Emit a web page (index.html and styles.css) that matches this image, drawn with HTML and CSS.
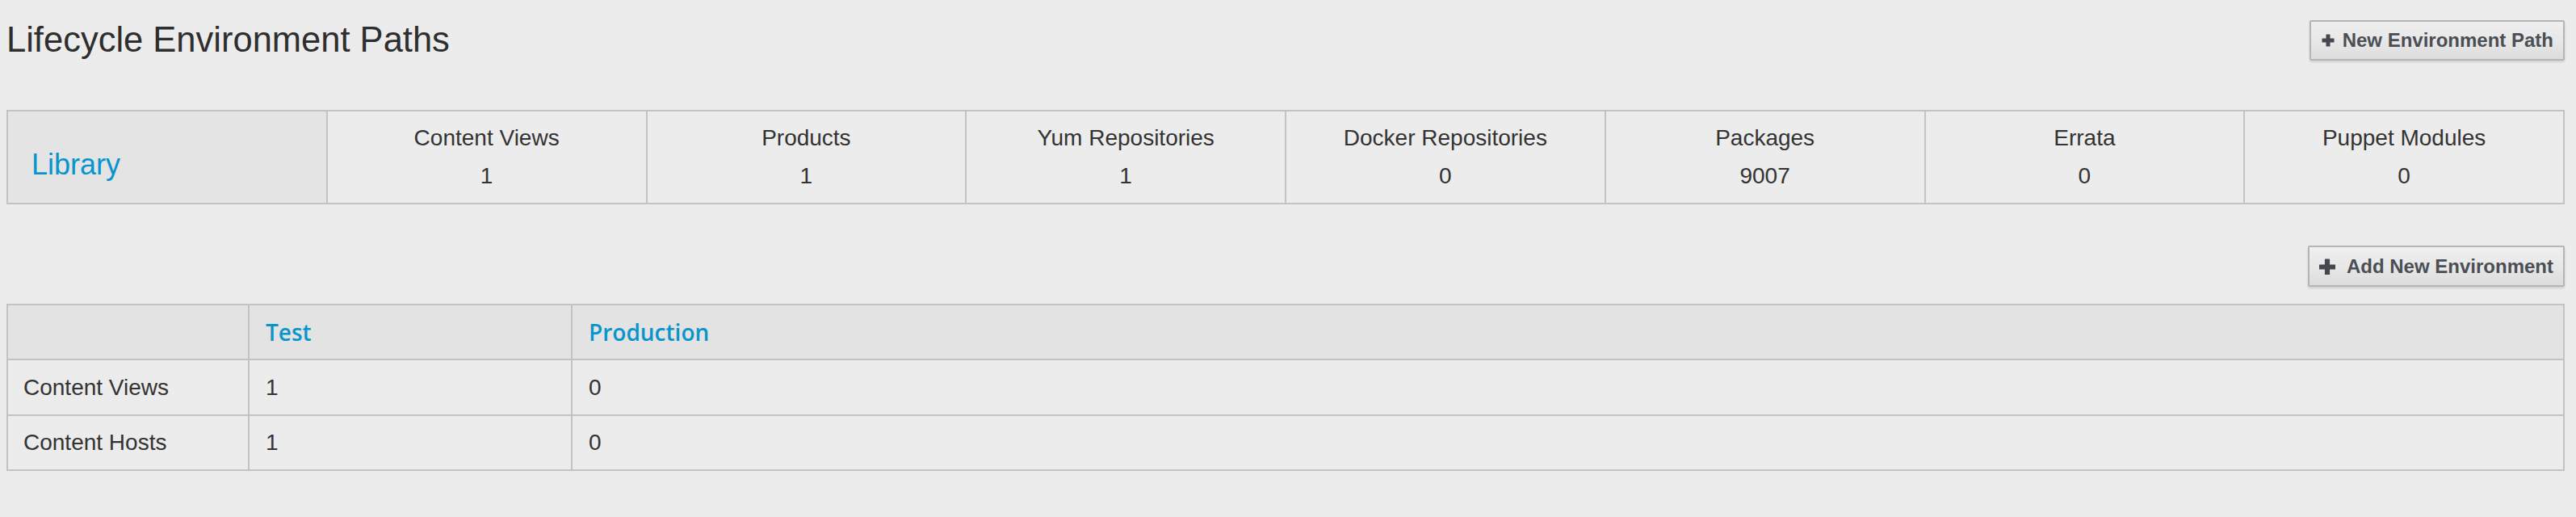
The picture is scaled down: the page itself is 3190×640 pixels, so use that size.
FILE: index.html
```html
<!DOCTYPE html>
<html>
<head>
<meta charset="utf-8">
<link rel="stylesheet" href="styles.css">
<title>Lifecycle Environment Paths</title>
</head>
<body>
<div class="page">
  <div class="top-row">
    <h1 class="title">Lifecycle Environment Paths</h1>
    <button class="btn btn-path">
      <svg class="plus plus-sm" viewBox="0 0 16 16"><path d="M6 0.5h4a0.5 0.5 0 0 1 .5 .5v4.5H15a0.5 0.5 0 0 1 .5 .5v4a0.5 0.5 0 0 1 -.5 .5h-4.5V15a0.5 0.5 0 0 1 -.5 .5H6a0.5 0.5 0 0 1 -.5 -.5v-4.5H1a0.5 0.5 0 0 1 -.5 -.5V6a0.5 0.5 0 0 1 .5 -.5h4.5V1a0.5 0.5 0 0 1 .5 -.5z"/></svg>
      <span>New Environment Path</span>
    </button>
  </div>

  <table class="summary">
    <tr>
      <td class="lib-cell"><a class="lib-link">Library</a></td>
      <td class="stat"><div class="stat-label">Content Views</div><div class="stat-val">1</div></td>
      <td class="stat"><div class="stat-label">Products</div><div class="stat-val">1</div></td>
      <td class="stat"><div class="stat-label">Yum Repositories</div><div class="stat-val">1</div></td>
      <td class="stat"><div class="stat-label">Docker Repositories</div><div class="stat-val">0</div></td>
      <td class="stat"><div class="stat-label">Packages</div><div class="stat-val">9007</div></td>
      <td class="stat"><div class="stat-label">Errata</div><div class="stat-val">0</div></td>
      <td class="stat"><div class="stat-label">Puppet Modules</div><div class="stat-val">0</div></td>
    </tr>
  </table>

  <div class="add-row">
    <button class="btn btn-add">
      <svg class="plus plus-lg" viewBox="0 0 20 20"><path d="M7.5 0.5h5a0.6 0.6 0 0 1 .6 .6v6.4h6.3a0.6 0.6 0 0 1 .6 .6v4.8a0.6 0.6 0 0 1 -.6 .6h-6.3v6.3a0.6 0.6 0 0 1 -.6 .6h-5a0.6 0.6 0 0 1 -.6 -.6v-6.3H0.6a0.6 0.6 0 0 1 -.6 -.6V8.1a0.6 0.6 0 0 1 .6 -.6h6.3V1.1a0.6 0.6 0 0 1 .6 -.6z"/></svg>
      <span>Add New Environment</span>
    </button>
  </div>

  <table class="envs">
    <thead>
      <tr>
        <th class="c1"></th>
        <th class="c2"><a class="env-link">Test</a></th>
        <th class="c3"><a class="env-link">Production</a></th>
      </tr>
    </thead>
    <tbody>
      <tr>
        <td>Content Views</td>
        <td>1</td>
        <td>0</td>
      </tr>
      <tr>
        <td>Content Hosts</td>
        <td>1</td>
        <td>0</td>
      </tr>
    </tbody>
  </table>
</div>
</body>
</html>
```

FILE: styles.css
```css
html, body {
  margin: 0;
  padding: 0;
  background: #ececec;
}

body {
  font-family: "Liberation Sans", Arial, sans-serif;
  color: #333333;
}

.page {
  padding: 0 14px 0 8px;
}

.top-row {
  display: flex;
  justify-content: space-between;
  align-items: flex-start;
  padding-top: 25px;
}

.title {
  margin: 0;
  font-family: "Liberation Sans", Arial, sans-serif;
  font-weight: normal;
  font-size: 43.5px;
  line-height: 48px;
  color: #2e2e2e;
}

.btn {
  display: inline-flex;
  align-items: center;
  justify-content: flex-start;
  box-sizing: border-box;
  height: 50px;
  border: 2px solid #b5b5b5;
  border-radius: 2px;
  background: linear-gradient(to bottom, #efefef 0%, #e6e6e6 60%, #dcdcdc 100%);
  box-shadow: 0 2px 3px rgba(0, 0, 0, 0.12);
  font-family: "Liberation Sans", Arial, sans-serif;
  font-weight: bold;
  font-size: 24px;
  color: #4b4f55;
  padding: 0 12px 0 12px;
  margin: 0;
  white-space: nowrap;
  cursor: pointer;
}

.plus {
  fill: #44484e;
  flex: none;
}

.plus-sm {
  width: 16px;
  height: 16px;
  margin-right: 10px;
  margin-left: 1px;
}

.plus-lg {
  width: 20px;
  height: 20px;
  margin-right: 14px;
}

.btn-add {
  height: 51px;
}

table {
  border-collapse: collapse;
  width: 100%;
}

.summary {
  margin-top: 61px;
  table-layout: fixed;
}

.summary td {
  border: 2px solid #c3c3c3;
  vertical-align: top;
}

.lib-cell {
  background: #e4e4e4;
  padding: 46px 0 0 29px;
  height: 67px;
  line-height: 40px;
}

.lib-link {
  font-size: 36px;
  color: #0795cc;
  text-decoration: none;
}

.stat {
  text-align: center;
  padding: 13px 4px;
  font-size: 28px;
  line-height: 40px;
  color: #333333;
}

.stat-val {
  margin-top: 7px;
}

.add-row {
  display: flex;
  justify-content: flex-end;
  margin-top: 51px;
}

.envs {
  margin-top: 21px;
}

.envs th,
.envs td {
  border: 2px solid #c3c3c3;
  text-align: left;
  padding: 13px 20px;
  line-height: 40px;
  font-size: 28px;
}

.envs th {
  background: #e3e3e3;
  font-family: "Open Sans", sans-serif;
  font-weight: 600;
}

.envs td {
  color: #333333;
}

.envs td:first-child {
  padding-left: 19px;
}

.envs tbody tr:first-child td {
  padding-top: 14px;
}

.c1 {
  width: 257px;
}

.c2 {
  width: 358px;
}

.env-link {
  color: #0795cc;
  text-decoration: none;
}
```
